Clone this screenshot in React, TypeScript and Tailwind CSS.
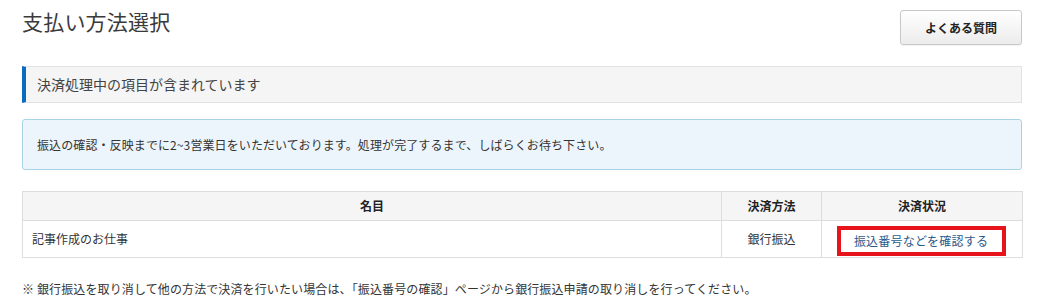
const font = { fontFamily: '"Noto Sans CJK JP", "Noto Sans", sans-serif' };

const App: React.FC = () => {
  return (
    <div className="w-[1052px] h-[306px] bg-white text-[#333]" style={font}>
      <div className="w-[1000px] ml-[22px] pt-[10px]">
        <div className="flex justify-between items-start">
          <h1 className="text-[21px] leading-[22px] tracking-[0.2px] text-[#3a3a3a]">支払い方法選択</h1>
          <button className="w-[122px] h-[35px] rounded-[3px] border border-[#c8c8c8] bg-gradient-to-b from-white to-[#ececec] text-[12px] font-bold text-[#222] shadow-[0_1px_1px_rgba(0,0,0,0.05)]">
            よくある質問
          </button>
        </div>

        <div className="mt-[21px] h-[37px] flex items-center border border-[#e2e2e2] border-l-4 border-l-[#0b6cbf] bg-[#f5f5f5] pl-[11px] text-[14px] text-[#444]">
          決済処理中の項目が含まれています
        </div>

        <div className="mt-[16px] h-[51px] flex items-center rounded-[3px] border border-[#a9d4e5] bg-[#ecf5fb] pl-[14px] text-[12px] tracking-[0.1px] text-[#333]">
          振込の確認・反映までに2~3営業日をいただいております。処理が完了するまで、しばらくお待ち下さい。
        </div>

        <table className="mt-[21px] w-[1000px] border-collapse text-[12px] table-fixed">
          <colgroup>
            <col className="w-[699px]" />
            <col className="w-[100px]" />
            <col className="w-[201px]" />
          </colgroup>
          <thead>
            <tr className="h-[29px] bg-[#f5f5f5]">
              <th className="border border-[#dddddd] font-bold text-center text-[#222]">名目</th>
              <th className="border border-[#dddddd] font-bold text-center text-[#222]">決済方法</th>
              <th className="border border-[#dddddd] font-bold text-center text-[#222]">決済状況</th>
            </tr>
          </thead>
          <tbody>
            <tr className="h-[37px]">
              <td className="border border-[#dddddd] pl-[9px] text-left">記事作成のお仕事</td>
              <td className="border border-[#dddddd] text-center">銀行振込</td>
              <td className="border border-[#dddddd] p-0 pt-[5px] align-top">
                <div className="flex justify-center">
                  <a className="ml-[-2px] w-[169px] h-[30px] flex items-center justify-center border-4 border-[#e8141c] text-[#2a5a8c] tracking-[0.2px]">
                    振込番号などを確認する
                  </a>
                </div>
              </td>
            </tr>
          </tbody>
        </table>

        <p className="mt-[22px] text-[12px] leading-[18px] tracking-[0.12px] text-[#333]">
          ※ 銀行振込を取り消して他の方法で決済を行いたい場合は、「振込番号の確認」ページから銀行振込申請の取り消しを行ってください。
        </p>
      </div>
    </div>
  );
};

export default App;
